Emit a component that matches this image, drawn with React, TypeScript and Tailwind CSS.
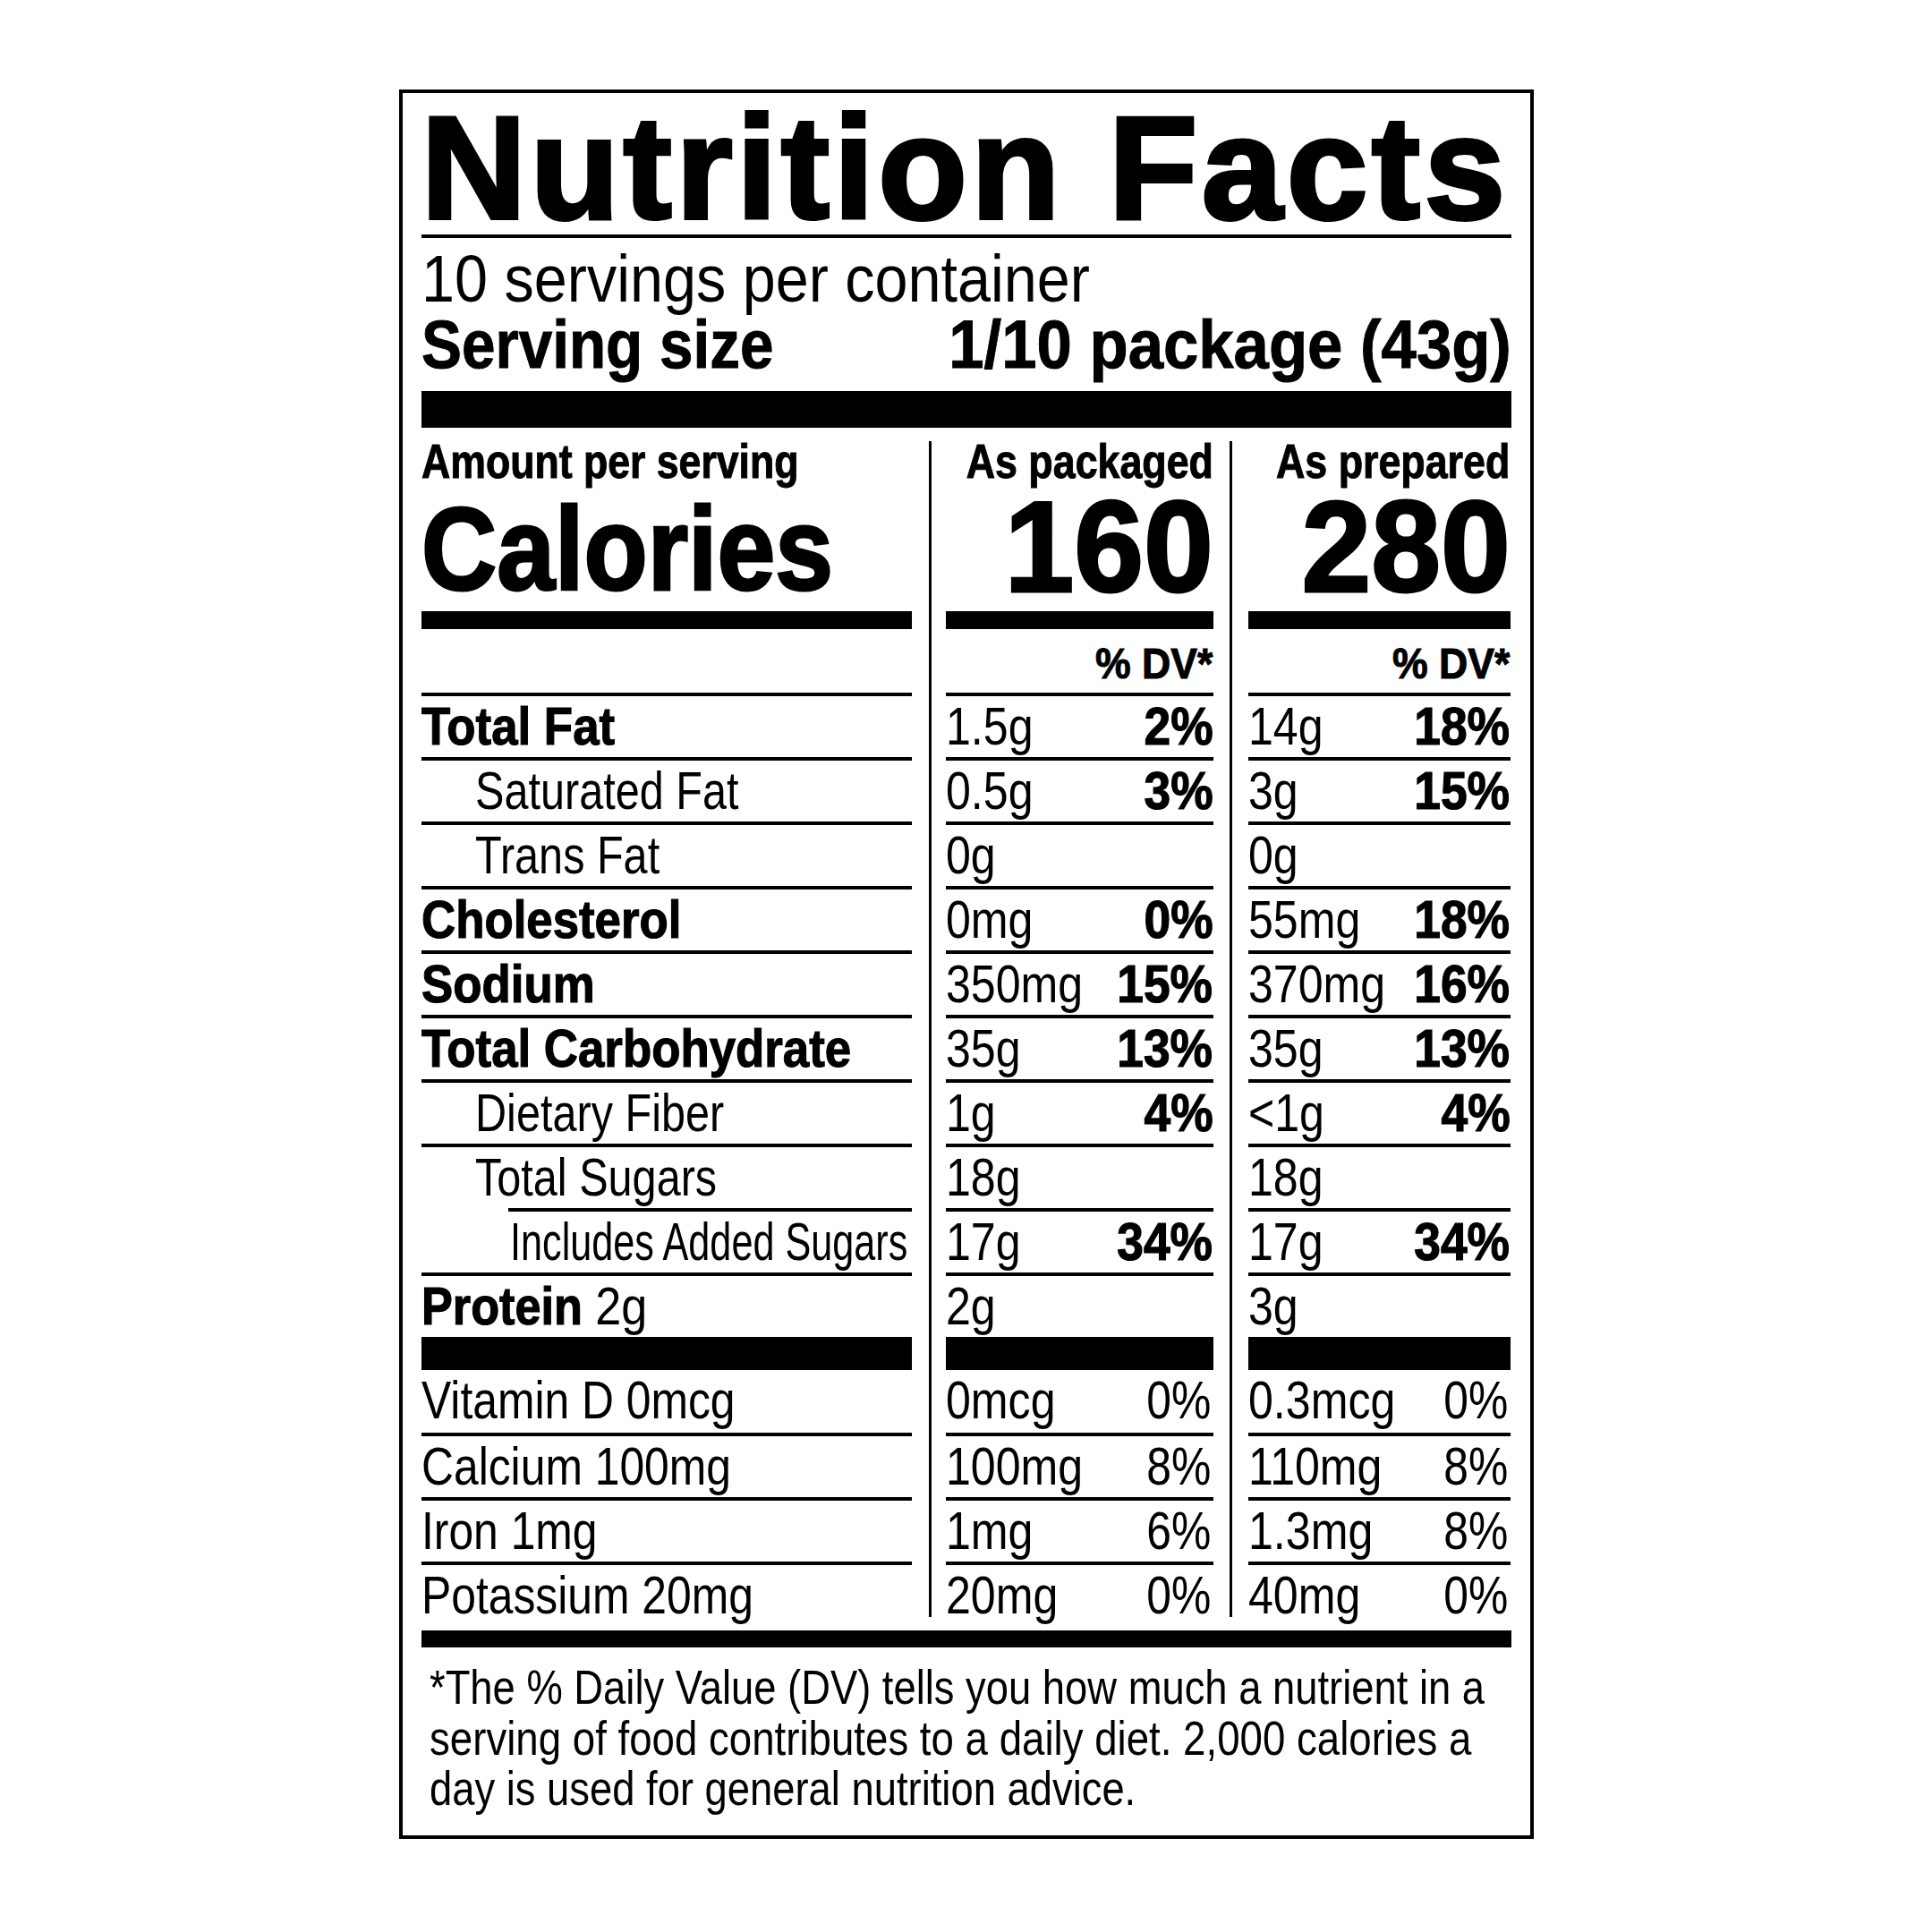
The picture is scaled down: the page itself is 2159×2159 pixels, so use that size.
import React from "react";

// Liberation Sans squeezed horizontally stands in for Helvetica Condensed
const SANS = "[font-family:'Liberation_Sans',Arial,sans-serif]";

type Nutrient = {
  label: string;
  bold?: boolean;
  indent?: 0 | 1 | 2;
  suffix?: string;
  pk: string;
  pkDv?: string;
  pr: string;
  prDv?: string;
};

const nutrients: Nutrient[] = [
  { label: "Total Fat", bold: true, pk: "1.5g", pkDv: "2%", pr: "14g", prDv: "18%" },
  { label: "Saturated Fat", indent: 1, pk: "0.5g", pkDv: "3%", pr: "3g", prDv: "15%" },
  { label: "Trans Fat", indent: 1, pk: "0g", pr: "0g" },
  { label: "Cholesterol", bold: true, pk: "0mg", pkDv: "0%", pr: "55mg", prDv: "18%" },
  { label: "Sodium", bold: true, pk: "350mg", pkDv: "15%", pr: "370mg", prDv: "16%" },
  { label: "Total Carbohydrate", bold: true, pk: "35g", pkDv: "13%", pr: "35g", prDv: "13%" },
  { label: "Dietary Fiber", indent: 1, pk: "1g", pkDv: "4%", pr: "<1g", prDv: "4%" },
  { label: "Total Sugars", indent: 1, pk: "18g", pr: "18g" },
  { label: "Includes Added Sugars", indent: 2, pk: "17g", pkDv: "34%", pr: "17g", prDv: "34%" },
  { label: "Protein", bold: true, suffix: " 2g", pk: "2g", pr: "3g" },
];

const vitamins = [
  { label: "Vitamin D 0mcg", pk: "0mcg", pkDv: "0%", pr: "0.3mcg", prDv: "0%", h: "h-[70px]" },
  { label: "Calcium 100mg", pk: "100mg", pkDv: "8%", pr: "110mg", prDv: "8%", h: "h-[68px]" },
  { label: "Iron 1mg", pk: "1mg", pkDv: "6%", pr: "1.3mg", prDv: "8%", h: "h-[68px]" },
  { label: "Potassium 20mg", pk: "20mg", pkDv: "0%", pr: "40mg", prDv: "0%", h: "h-[73px]" },
];

const Rule = ({ className = "" }: { className?: string }) => (
  <div className={`h-[4px] shrink-0 bg-black ${className}`} />
);

// left / right anchored squeezed text
const L = ({ sx, className = "", children }: { sx: string; className?: string; children: React.ReactNode }) => (
  <span className={`col-start-1 row-start-1 inline-block justify-self-start origin-left whitespace-nowrap ${sx} ${className}`}>
    {children}
  </span>
);
const R = ({ sx, className = "", children }: { sx: string; className?: string; children: React.ReactNode }) => (
  <span className={`col-start-1 row-start-1 inline-block justify-self-end origin-right whitespace-nowrap ${sx} ${className}`}>
    {children}
  </span>
);

function labelClass(n: Nutrient) {
  if (n.label === "Includes Added Sugars") return "scale-x-[0.72]";
  if (n.suffix) return "scale-x-[0.87]";
  return n.bold ? "scale-x-[0.88]" : "scale-x-[0.81]";
}

function LabelColumn() {
  return (
    <div className="flex w-[548px] shrink-0 flex-col">
      <div className="grid h-[75px] grid-cols-[minmax(0,1fr)] text-[53px] font-bold leading-[75px] [-webkit-text-stroke:1px_black]">
        <L sx="scale-x-[0.842]">Amount per serving</L>
      </div>
      <div className="grid h-[130px] grid-cols-[minmax(0,1fr)] content-start text-[131px] font-bold leading-[122px] [-webkit-text-stroke:3px_black]">
        <L sx="scale-x-[0.89]">Calories</L>
      </div>
      <div className="h-[20px] bg-black" />
      <div className="h-[71px]" />
      <Rule />
      {nutrients.map((n, i) => (
        <React.Fragment key={n.label}>
          <div
            className={`grid h-[68px] grid-cols-[minmax(0,1fr)] text-[60px] leading-[68px] ${
              n.indent === 1 ? "pl-[60px]" : n.indent === 2 ? "pl-[99px]" : ""
            } ${n.bold ? "font-bold" : ""}`}
          >
            <L sx={labelClass(n)}>
              <span className={n.bold ? "[-webkit-text-stroke:1.2px_black]" : ""}>{n.label}</span>
              {n.suffix && <span className="font-normal">{n.suffix}</span>}
            </L>
          </div>
          {i < nutrients.length - 1 && (
            <Rule className={nutrients[i + 1].indent === 2 ? "ml-[97px]" : ""} />
          )}
        </React.Fragment>
      ))}
      <div className="h-[37px] bg-black" />
      {vitamins.map((v, i) => (
        <React.Fragment key={v.label}>
          <div className={`${v.h} grid grid-cols-[minmax(0,1fr)] content-start text-[60px] leading-[68px]`}>
            <L sx="scale-x-[0.83]">{v.label}</L>
          </div>
          {i < vitamins.length - 1 && <Rule />}
        </React.Fragment>
      ))}
    </div>
  );
}

function ValueColumn({ title, calories, prepared }: { title: string; calories: string; prepared?: boolean }) {
  return (
    <div className={`flex shrink-0 flex-col ${prepared ? "w-[293px]" : "w-[299px]"}`}>
      <div className="grid h-[75px] grid-cols-[minmax(0,1fr)] text-[53px] font-bold leading-[75px] [-webkit-text-stroke:1px_black]">
        <R sx="scale-x-[0.845]">{title}</R>
      </div>
      <div className="grid h-[130px] grid-cols-[minmax(0,1fr)] content-start text-[145px] font-bold leading-[116px] [-webkit-text-stroke:3px_black]">
        <R sx="scale-x-[0.965]">{calories}</R>
      </div>
      <div className="h-[20px] bg-black" />
      <div className="grid h-[71px] grid-cols-[minmax(0,1fr)] content-start pt-[6px] text-[49px] font-bold leading-[64px] [-webkit-text-stroke:1px_black]">
        <R sx="scale-x-[0.91]">% DV*</R>
      </div>
      <Rule />
      {nutrients.map((n, i) => {
        const amt = prepared ? n.pr : n.pk;
        const dv = prepared ? n.prDv : n.pkDv;
        return (
          <React.Fragment key={n.label}>
            <div className="grid h-[68px] grid-cols-[minmax(0,1fr)] text-[60px] leading-[68px]">
              <L sx="scale-x-[0.835]">{amt}</L>
              {dv && (
                <R sx="scale-x-[0.89]" className="font-bold [-webkit-text-stroke:1.2px_black]">
                  {dv}
                </R>
              )}
            </div>
            {i < nutrients.length - 1 && <Rule />}
          </React.Fragment>
        );
      })}
      <div className="h-[37px] bg-black" />
      {vitamins.map((v, i) => (
        <React.Fragment key={v.label}>
          <div className={`${v.h} grid grid-cols-[minmax(0,1fr)] content-start text-[60px] leading-[68px]`}>
            <L sx="scale-x-[0.835]">{prepared ? v.pr : v.pk}</L>
            <R sx="scale-x-[0.83]" className="pr-[3px]">
              {prepared ? v.prDv : v.pkDv}
            </R>
          </div>
          {i < vitamins.length - 1 && <Rule />}
        </React.Fragment>
      ))}
    </div>
  );
}

export default function App() {
  return (
    <div className="flex min-h-[2159px] w-[2159px] justify-center bg-white pt-[100px] text-black">
      <div className={`h-fit w-[1268px] border-[4px] border-black px-[21px] ${SANS}`}>
        <div className="h-[158px] whitespace-nowrap pt-[9px] text-[163px] font-bold leading-[150px] tracking-[4.4px] [-webkit-text-stroke:4px_black]">
          Nutrition Facts
        </div>
        <Rule />
        <div className="grid h-[90px] grid-cols-[minmax(0,1fr)] text-[75px] leading-[90px]">
          <L sx="scale-x-[0.887]">10 servings per container</L>
        </div>
        <div className="grid h-[58px] grid-cols-[minmax(0,1fr)] text-[76px] font-bold leading-[58px] [-webkit-text-stroke:1px_black]">
          <L sx="scale-x-[0.887]">Serving size</L>
          <R sx="scale-x-[0.93]">1/10 package (43g)</R>
        </div>
        <div className="mt-[23px] h-[41px] bg-black" />

        <div className="flex">
          <LabelColumn />
          <div className="mb-[15px] ml-[19px] mr-[16px] mt-[15px] w-[3px] shrink-0 bg-black" />
          <ValueColumn title="As packaged" calories="160" />
          <div className="mx-[18px] mb-[15px] mt-[15px] w-[3px] shrink-0 bg-black" />
          <ValueColumn title="As prepared" calories="280" prepared />
        </div>

        <div className="h-[19px] bg-black" />
        <div className="grid grid-cols-[minmax(0,1fr)] pb-[24px] pl-[9px] pt-[16px] text-[54px] leading-[56.5px]">
          <span className="inline-block origin-left scale-x-[0.84] whitespace-nowrap">
            *The % Daily Value (DV) tells you how much a nutrient in a
          </span>
          <span className="inline-block origin-left scale-x-[0.845] whitespace-nowrap">
            serving of food contributes to a daily diet. 2,000 calories a
          </span>
          <span className="inline-block origin-left scale-x-[0.84] whitespace-nowrap">
            day is used for general nutrition advice.
          </span>
        </div>
      </div>
    </div>
  );
}
